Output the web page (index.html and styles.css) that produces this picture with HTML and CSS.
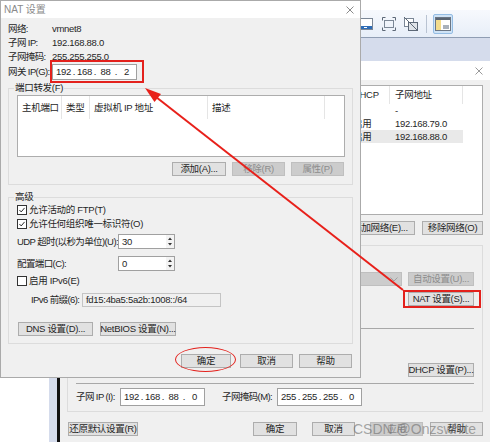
FILE: index.html
```html
<!DOCTYPE html>
<html lang="zh-CN">
<head>
    <meta charset="UTF-8">
    <meta name="viewport" content="width=device-width, initial-scale=1.0">
    <title>NAT 设置</title>
    <link rel="stylesheet" href="styles.css">
</head>
<body>
<div class="desk">

    <!-- VMware main window (behind) -->
    <div class="app">
        <div class="app-top"></div>
        <div class="toolbar">
            <svg class="tb-icon" viewBox="0 0 16 16"><rect x="0.5" y="2.5" width="15" height="11" fill="#fff" stroke="#7b8796"/><rect x="1" y="10" width="14" height="3" fill="#2e6cb6"/><rect x="7" y="11" width="3" height="1" fill="#fff"/></svg>
            <svg class="tb-icon i2" viewBox="0 0 16 16"><rect x="3.5" y="4.5" width="9" height="7" fill="none" stroke="#7b8796"/><path d="M1.5 4.5v-3h3M11.5 1.5h3v3M14.5 11.5v3h-3M4.5 14.5h-3v-3" fill="none" stroke="#5d6877"/></svg>
            <svg class="tb-icon i3" viewBox="0 0 16 16"><rect x="1.5" y="2.5" width="9" height="8" fill="#fff" stroke="#7b8796"/><rect x="5.5" y="6.5" width="9" height="8" fill="#dfe3e8" stroke="#5d6877"/><path d="M1 1l14 14" stroke="#5d6877"/></svg>
            <span class="tb-sep"></span>
            <span class="tb-on">
                <svg class="tb-icon" viewBox="0 0 16 16"><rect x="0.5" y="1.5" width="15" height="13" fill="#fff" stroke="#6b7684"/><rect x="1" y="2" width="14" height="2" fill="#5a6573"/><rect x="1" y="4" width="5" height="10" fill="#f3dc8c"/><rect x="8" y="9" width="6" height="4" fill="#a9b1bb"/></svg>
            </span>
        </div>
        <div class="app-main">
            <div class="app-edge"></div>
        </div>
    </div>

    <!-- 虚拟网络编辑器 (behind) -->
    <div class="vne">
        <div class="vne-title">
            <svg class="close" viewBox="0 0 8 8"><path d="M0.5 0.5l7 7M7.5 0.5l-7 7" stroke="#9a9a9a"/></svg>
        </div>
        <div class="vne-body">
            <div class="netlist">
                <div class="nl-row nl-head">
                    <span class="c1">名称</span><span class="c2">类型</span><span class="c3">外部连接</span><span class="c4">主机连接</span><span class="c5">DHCP</span><span class="c6">子网地址</span>
                </div>
                <div class="nl-row">
                    <span class="c1">VMnet0</span><span class="c2">桥接模式</span><span class="c3">自动桥接</span><span class="c4">-</span><span class="c5">-</span><span class="c6">-</span>
                </div>
                <div class="nl-row">
                    <span class="c1">VMnet1</span><span class="c2">仅主机...</span><span class="c3">-</span><span class="c4">已连接</span><span class="c5">启用</span><span class="c6">192.168.79.0</span>
                </div>
                <div class="nl-row sel">
                    <span class="c1">VMnet8</span><span class="c2">NAT 模式</span><span class="c3">NAT 模式</span><span class="c4">已连接</span><span class="c5">启用</span><span class="c6">192.168.88.0</span>
                </div>
            </div>

            <div class="vne-btns">
                <button class="btn add-net">添加网络(E)...</button>
                <button class="btn del-net">移除网络(O)</button>
            </div>

            <div class="vnet-box">
                <div class="vb-row vb-a">
                    <div class="combo">
                        <svg viewBox="0 0 8 5"><path d="M0.5 0.5l3.5 3.5 3.5-3.5" fill="none" stroke="#a0a0a0"/></svg>
                    </div>
                    <button class="btn off side-btn">自动设置(U)...</button>
                </div>
                <div class="vb-row vb-b">
                    <span class="marked">
                        <button class="btn side-btn">NAT 设置(S)...</button>
                        <span class="mark-rect nat-mark"></span>
                    </span>
                </div>
                <div class="vb-sep s1"></div>
                <div class="vb-row vb-c">
                    <button class="btn side-btn">DHCP 设置(P)...</button>
                </div>
                <div class="vb-sep s2"></div>
                <div class="vb-ip">
                    <span class="ip-lbl">子网 IP (I):</span>
                    <div class="ipbox big">
                        <span class="f">192</span><span class="d">.</span><span class="f">168</span><span class="d">.</span><span class="f">88</span><span class="d">.</span><span class="f">0</span>
                    </div>
                    <span class="ip-lbl mask-lbl">子网掩码(M):</span>
                    <div class="ipbox big">
                        <span class="f">255</span><span class="d">.</span><span class="f">255</span><span class="d">.</span><span class="f">255</span><span class="d">.</span><span class="f">0</span>
                    </div>
                </div>
            </div>

            <div class="vne-foot">
                <button class="btn reset">还原默认设置(R)</button>
                <button class="btn ok2">确定</button>
                <button class="btn cancel2">取消</button>
                <button class="btn off apply2">应用</button>
                <button class="btn help2">帮助</button>
            </div>
        </div>
    </div>

    <!-- NAT 设置 dialog -->
    <div class="nat">
        <div class="nat-title">
            <span>NAT 设置</span>
            <svg class="close" viewBox="0 0 8 8"><path d="M0.5 0.5l7 7M7.5 0.5l-7 7" stroke="#8a8a8a"/></svg>
        </div>
        <div class="nat-body">
            <div class="info-row"><span class="lbl">网络:</span><span>vmnet8</span></div>
            <div class="info-row"><span class="lbl">子网 IP:</span><span>192.168.88.0</span></div>
            <div class="info-row"><span class="lbl">子网掩码:</span><span>255.255.255.0</span></div>
            <div class="info-row gw">
                <span class="lbl">网关 IP(G):</span>
                <div class="ipbox">
                    <span class="f">192</span><span class="d">.</span><span class="f">168</span><span class="d">.</span><span class="f">88</span><span class="d">.</span><span class="f">2</span>
                </div>
                <span class="mark-rect gw-mark"></span>
            </div>

            <fieldset class="grp pf">
                <legend>端口转发(F)</legend>
                <div class="pf-list">
                    <div class="pf-head">
                        <span class="h1">主机端口</span><span class="h2">类型</span><span class="h3">虚拟机 IP 地址</span><span class="h4">描述</span>
                    </div>
                </div>
                <div class="pf-btns">
                    <button class="btn w54">添加(A)...</button>
                    <button class="btn off w53">移除(R)</button>
                    <button class="btn off w53">属性(P)</button>
                </div>
            </fieldset>

            <fieldset class="grp adv">
                <legend>高级</legend>
                <div class="cb"><span class="box"><svg viewBox="0 0 10 10"><path d="M1.8 5l2.2 2.4 4.2-5" fill="none" stroke="#222" stroke-width="1.2"/></svg></span>允许活动的 FTP(T)</div>
                <div class="cb"><span class="box"><svg viewBox="0 0 10 10"><path d="M1.8 5l2.2 2.4 4.2-5" fill="none" stroke="#222" stroke-width="1.2"/></svg></span>允许任何组织唯一标识符(O)</div>
                <div class="spin-row udp">
                    <span class="spin-lbl">UDP 超时(以秒为单位)(U):</span>
                    <div class="spin"><span class="val">30</span><svg class="arr" viewBox="0 0 8 13"><path d="M2 5l2-2.5 2 2.5zM2 8l2 2.5 2-2.5z" fill="#333"/></svg></div>
                </div>
                <div class="spin-row port">
                    <span class="spin-lbl">配置端口(C):</span>
                    <div class="spin"><span class="val">0</span><svg class="arr" viewBox="0 0 8 13"><path d="M2 5l2-2.5 2 2.5zM2 8l2 2.5 2-2.5z" fill="#333"/></svg></div>
                </div>
                <div class="cb v6"><span class="box"></span>启用 IPv6(E)</div>
                <div class="v6-row">
                    <span class="v6-lbl">IPv6 前缀(6):</span>
                    <div class="v6-box">fd15:4ba5:5a2b:1008::/64</div>
                </div>
                <div class="adv-btns">
                    <button class="btn dns">DNS 设置(D)...</button>
                    <button class="btn nb">NetBIOS 设置(N)...</button>
                </div>
            </fieldset>

            <div class="nat-foot">
                <span class="marked">
                    <button class="btn ok">确定</button>
                    <span class="ok-ring"></span>
                </span>
                <button class="btn cancel">取消</button>
                <button class="btn help">帮助</button>
            </div>
        </div>
    </div>

    <!-- annotation arrow -->
    <svg class="arrow" viewBox="0 0 490 442">
        <line x1="403" y1="290" x2="156" y2="97" stroke="#e8201a" stroke-width="2"/>
        <polygon points="145,88 161,94 154.5,102" fill="#e8201a"/>
    </svg>

    <div class="watermark">CSDN @Onzswhite</div>
</div>
</body>
</html>
```

FILE: styles.css
```css
* {
    box-sizing: border-box;
}

body {
    margin: 0;
    font-family: "Liberation Sans", "Noto Sans CJK SC", sans-serif;
    font-size: 9.5px;
    line-height: 12px;
    letter-spacing: -0.3px;
    color: #262626;
    background: #fff;
}

.desk {
    position: relative;
    width: 490px;
    height: 442px;
    overflow: hidden;
    background: #fff;
}

/* ---- buttons and boxes ---- */

.btn {
    height: 14px;
    padding: 0;
    border: 1px solid #adadad;
    background: #e1e1e1;
    font: inherit;
    line-height: 12px;
    letter-spacing: -0.3px;
    color: #262626;
    display: flex;
    align-items: center;
    justify-content: center;
    white-space: nowrap;
    flex: none;
}

.btn.off {
    background: #cccccc;
    border-color: #bfbfbf;
    color: #8d8d8d;
}

.ipbox {
    display: flex;
    align-items: center;
    width: 85px;
    height: 16px;
    padding-left: 3px;
    border: 1px solid #a0a0a0;
    background: #fff;
    flex: none;
}

.ipbox .f {
    width: 15px;
    text-align: center;
}

.ipbox .d {
    width: 6px;
    text-align: center;
}

.ipbox.big {
    height: 18px;
}

.close {
    width: 8px;
    height: 8px;
}

.marked {
    position: relative;
    display: inline-flex;
}

.mark-rect {
    position: absolute;
    border: 2px solid #e3211c;
}

/* ---- main window ---- */

.app {
    position: absolute;
    left: 49px;
    top: 0;
    right: 0;
    bottom: 0;
    display: flex;
    flex-direction: column;
}

.app-top {
    height: 10px;
    background: #fff;
}

.toolbar {
    height: 28px;
    display: flex;
    align-items: center;
    padding-left: 308px;
    background: linear-gradient(#f7f9fd, #e7eef8);
    border-bottom: 1px solid #8f9db3;
}

.tb-icon {
    width: 16px;
    height: 16px;
    flex: none;
}

.tb-icon.i2 {
    margin-left: 8px;
}

.tb-icon.i3 {
    margin-left: 6px;
}

.tb-sep {
    width: 1px;
    height: 18px;
    margin-left: 7px;
    background: #b9c3d2;
}

.tb-on {
    width: 20px;
    height: 20px;
    margin-left: 6px;
    display: flex;
    align-items: center;
    justify-content: center;
    background: #cfe3f6;
    border: 1px solid #94bde4;
    border-radius: 2px;
}

.app-main {
    flex: 1;
    display: flex;
    padding-left: 8px;
    background: #d5dcec;
}

.app-edge {
    width: 3px;
    background: #111;
}

/* ---- virtual network editor ---- */

.vne {
    position: absolute;
    left: 60px;
    top: 61px;
    width: 430px;
    bottom: 0;
    background: #f0f0f0;
}

.vne-title {
    height: 19px;
    display: flex;
    align-items: center;
    justify-content: flex-end;
    padding-right: 7px;
    background: #fff;
}

.vne-body {
    padding: 5px 7px 0 7px;
}

.netlist {
    height: 130px;
    border: 1px solid #adadad;
    background: #fff;
}

.nl-row {
    display: flex;
    width: 395px;
    height: 13px;
    line-height: 13px;
    white-space: nowrap;
}

.nl-row span {
    padding-left: 5px;
    overflow: hidden;
}

.nl-row.nl-head {
    height: 18px;
    line-height: 18px;
}

.nl-head span {
    border-right: 1px solid #e5e5e5;
}

.nl-row.sel {
    background: #e9e9e9;
}

.c1 { width: 60px; }
.c2 { width: 50px; }
.c3 { width: 85px; }
.c4 { width: 85px; }
.c5 { width: 42px; }
.c6 { width: 73px; }

.vne-btns {
    display: flex;
    justify-content: flex-end;
    gap: 7px;
    margin-top: 6px;
}

.add-net { width: 70px; }
.del-net { width: 61px; }

.vnet-box {
    margin-top: 10px;
    padding: 0 8px 5px 0;
    border: 1px solid #dcdcdc;
}

.vb-row {
    display: flex;
    justify-content: flex-end;
    gap: 6px;
}

.vb-a { margin-top: 26px; }
.vb-b { margin-top: 6px; }
.vb-c { margin-top: 34px; }

.side-btn {
    width: 66px;
}

.combo {
    width: 200px;
    height: 14px;
    display: flex;
    align-items: center;
    justify-content: flex-end;
    padding-right: 3px;
    background: #cccccc;
    border: 1px solid #bfbfbf;
}

.combo svg {
    width: 8px;
    height: 5px;
}

.nat-mark {
    left: -5px;
    top: -2px;
    width: 78px;
    height: 18px;
}

.vb-sep {
    height: 1px;
    margin-left: 8px;
    background: #a8a8a8;
}

.s1 { margin-top: 22px; }
.s2 { margin-top: 6px; }

.vb-ip {
    display: flex;
    align-items: center;
    margin-top: 4px;
    padding-left: 8px;
}

.ip-lbl {
    width: 44px;
    flex: none;
    white-space: nowrap;
    letter-spacing: -0.6px;
}

.mask-lbl {
    width: 55px;
    margin-left: 17px;
}

.vne-foot {
    display: flex;
    margin-top: 10px;
}

.reset { width: 70px; margin-left: 1px; }
.ok2 { width: 44px; margin-left: auto; }
.cancel2 { width: 43px; margin-left: 15px; }
.apply2 { width: 53px; margin-left: 15px; }
.help2 { width: 53px; margin-left: 7px; }

/* ---- NAT dialog ---- */

.nat {
    position: absolute;
    left: 0;
    top: 0;
    width: 361px;
    height: 378px;
    border: 1px solid #aaaaaa;
    background: #f0f0f0;
}

.nat-title {
    height: 17px;
    display: flex;
    align-items: center;
    justify-content: space-between;
    padding: 0 6px 0 3px;
    background: #fff;
    color: #8a8a8a;
    font-size: 10px;
    letter-spacing: 0;
}

.nat-body {
    padding: 4px 7px 0 7px;
}

.info-row {
    display: flex;
    align-items: center;
    height: 14px;
}

.lbl {
    width: 44px;
    flex: none;
    white-space: nowrap;
    letter-spacing: -0.6px;
}

.info-row.gw {
    position: relative;
    height: 16px;
}

.gw-mark {
    left: 42px;
    top: -4px;
    width: 94px;
    height: 23px;
}

.grp {
    margin: 0;
    padding: 0 7px 8px 8px;
    border: 1px solid #dcdcdc;
    min-width: 0;
}

.grp legend {
    margin-left: -3px;
    padding: 0 1px;
    line-height: 12px;
}

.pf {
    margin-top: 2px;
}

.pf-list {
    height: 62px;
    margin-top: 1px;
    border: 1px solid #adadad;
    background: #fff;
}

.pf-head {
    display: flex;
    height: 23px;
    line-height: 23px;
    white-space: nowrap;
}

.pf-head span {
    padding-left: 4px;
    overflow: hidden;
    border-right: 1px solid #e5e5e5;
}

.h1 { width: 44px; }
.h2 { width: 28px; }
.h3 { width: 118px; }
.h4 { width: 117px; }

.pf-btns {
    display: flex;
    justify-content: flex-end;
    gap: 6px;
    margin-top: 5px;
    padding-right: 1px;
}

.w54 { width: 54px; }
.w53 { width: 53px; }

.adv {
    margin-top: 6px;
    padding-bottom: 7px;
}

.cb {
    display: flex;
    align-items: center;
    height: 14px;
    white-space: nowrap;
}

.cb .box {
    width: 10px;
    height: 10px;
    margin-right: 2px;
    border: 1px solid #333;
    background: #fff;
    display: flex;
}

.cb .box svg {
    width: 8px;
    height: 8px;
}

.spin-row {
    display: flex;
    align-items: center;
}

.udp { margin-top: 3px; }
.port { margin-top: 7px; }

.spin-lbl {
    width: 101px;
    flex: none;
    white-space: nowrap;
    letter-spacing: -0.6px;
}

.spin {
    display: flex;
    width: 57px;
    height: 15px;
    border: 1px solid #a0a0a0;
    background: #fff;
}

.spin .val {
    flex: 1;
    padding-left: 3px;
    line-height: 13px;
}

.spin .arr {
    width: 8px;
    height: 13px;
    background: #f3f3f3;
}

.cb.v6 {
    margin-top: 3px;
}

.v6-row {
    display: flex;
    align-items: center;
    margin-top: 5px;
    padding-left: 14px;
}

.v6-lbl {
    width: 51px;
    flex: none;
    white-space: nowrap;
    letter-spacing: -0.6px;
}

.v6-box {
    width: 139px;
    height: 14px;
    padding-left: 3px;
    line-height: 12px;
    border: 1px solid #c4c4c4;
    background: #f0f0f0;
    white-space: nowrap;
}

.adv-btns {
    display: flex;
    gap: 7px;
    margin-top: 15px;
    padding-left: 1px;
}

.dns { width: 75px; }
.nb { width: 76px; }

.nat-foot {
    display: flex;
    justify-content: flex-end;
    margin-top: 10px;
    padding-right: 1px;
}

.ok { width: 50px; }
.cancel { width: 53px; margin-left: 9px; }
.help { width: 53px; margin-left: 6px; }

.ok-ring {
    position: absolute;
    left: -6px;
    top: -7px;
    width: 61px;
    height: 25px;
    border: 1.5px solid #e3211c;
    border-radius: 50%;
}

/* ---- annotations ---- */

.arrow {
    position: absolute;
    left: 0;
    top: 0;
    width: 490px;
    height: 442px;
    pointer-events: none;
}

.watermark {
    position: absolute;
    left: 353px;
    top: 421px;
    font-family: "Liberation Sans", sans-serif;
    font-size: 14px;
    line-height: 16px;
    letter-spacing: 0;
    color: rgba(110, 110, 110, 0.6);
    white-space: nowrap;
}
```
